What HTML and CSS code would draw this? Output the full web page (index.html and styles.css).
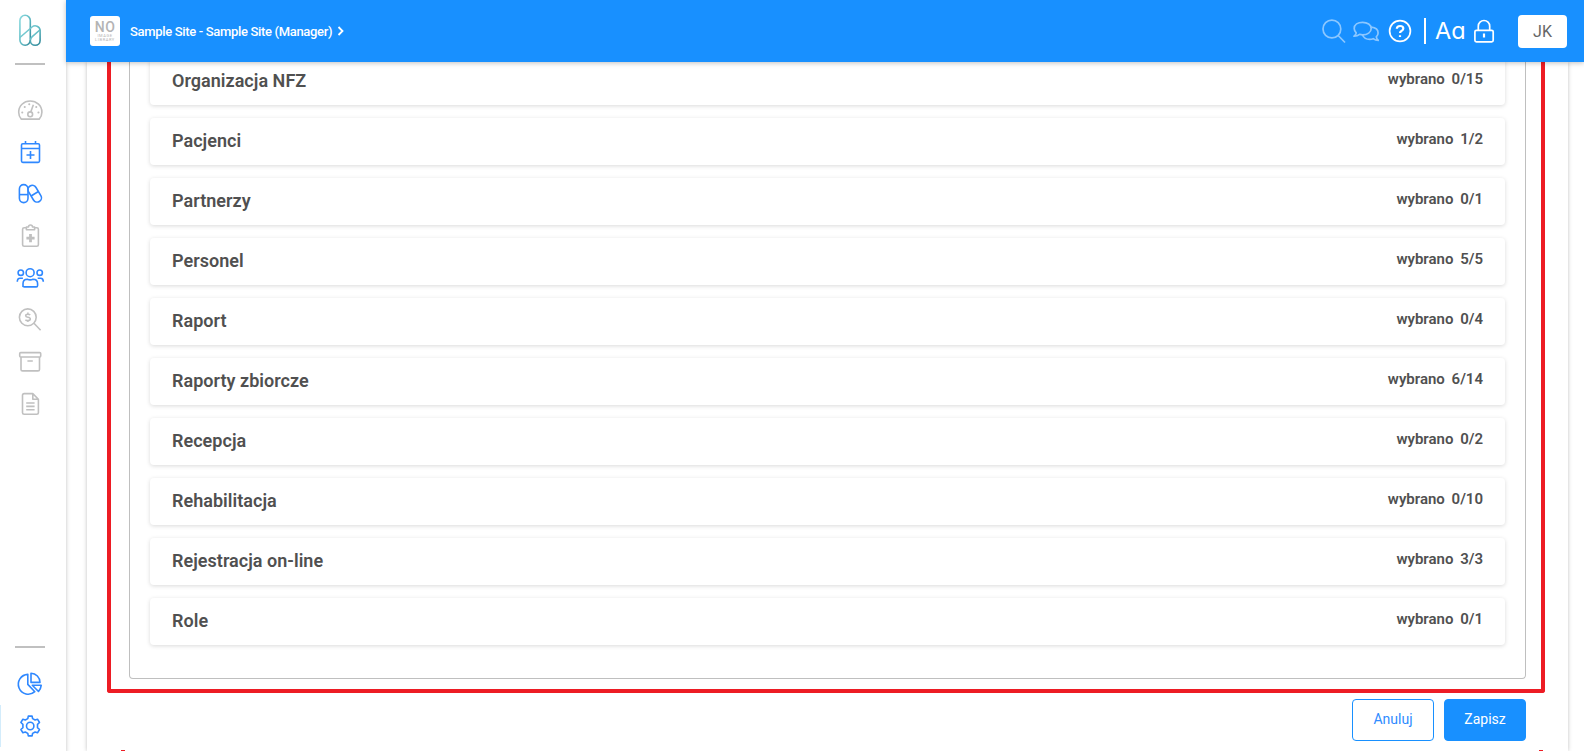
FILE: index.html
```html
<!DOCTYPE html>
<html lang="pl">

<head>
    <meta charset="UTF-8" />
    <title>Uprawnienia</title>
    <meta name="viewport" content="width=device-width, initial-scale=1" />
    <link rel="stylesheet" href="styles.css">
</head>

<body>
    <div class="app">
        <nav class="sidebar">
            <svg class="logo" viewBox="0 0 24 34">
                <defs>
                    <linearGradient id="teal" x1="0" y1="0" x2="1" y2="1">
                        <stop offset="0" stop-color="#8edbe0" />
                        <stop offset="0.5" stop-color="#62bcc5" />
                        <stop offset="1" stop-color="#2f8798" />
                    </linearGradient>
                </defs>
                <g fill="none" stroke="url(#teal)" stroke-width="1.6">
                    <path d="M12.3 25.8V6.5A5.2 5.2 0 0 0 1.9 6.5V26.1A5.2 5.2 0 0 0 12.3 26.1" />
                    <path d="M1.9 23.5L14 13A4.9 4.9 0 0 1 22.1 16.2V26.4A4.9 4.9 0 0 1 12.3 26.4" />
                    <path d="M12.3 26.4Q12.5 24.2 14.2 22.7L21.8 16" />
                </g>
            </svg>
            <span class="line"></span>

            <div class="menu">
                <a class="item">
                    <svg viewBox="0 0 30 30">
                        <path d="M6.3 24.1C4.2 21.9 3.7 19.6 3.7 17.2C3.7 10.8 8.7 6 15.2 6S26.9 10.8 26.9 17.2C26.9 19.6 26.2 21.9 24.2 24.1Z" />
                        <circle cx="15.2" cy="19.3" r="2.4" />
                        <path d="M15.8 16.8L18.4 9.8" />
                        <path class="dots" d="M7.2 17.5h.1M9.7 12h.1M14.2 9.3h.1M21.2 12h.1M23.4 17.5h.1" />
                    </svg>
                </a>
                <a class="item on">
                    <svg viewBox="0 0 30 30">
                        <rect x="6.5" y="6.8" width="18" height="18.6" rx="1.3" />
                        <path d="M6.5 11.5h18M10.5 4v2.8M20.5 4v2.8M15.5 14v8M11.5 18h8" />
                    </svg>
                </a>
                <a class="item on">
                    <svg viewBox="0 0 30 30">
                        <rect x="4.4" y="5.6" width="8.6" height="18" rx="4.3" />
                        <path d="M4.4 15.6h8.6" />
                        <g transform="rotate(-31 19.6 14.7)">
                            <rect x="15.4" y="5.8" width="8.6" height="18" rx="4.3" />
                            <path d="M15.4 14.8h8.6" />
                        </g>
                    </svg>
                </a>
                <a class="item">
                    <svg viewBox="0 0 30 30">
                        <path d="M11 6.7H9.2Q7.6 6.7 7.6 8.3V23.7Q7.6 25.3 9.2 25.3H21.8Q23.4 25.3 23.4 23.7V8.3Q23.4 6.7 21.8 6.7H20" />
                        <path d="M11.4 8.7V6H13.5A2 2 0 0 1 17.5 6H19.6V8.7Z" />
                        <path class="plus" d="M15.5 13v8.2M11.4 17.1h8.2" />
                    </svg>
                </a>
                <a class="item on">
                    <svg viewBox="0 0 30 30">
                        <circle cx="15.1" cy="9.7" r="4" />
                        <circle cx="5.8" cy="9.7" r="2.7" />
                        <circle cx="24.7" cy="9.7" r="2.7" />
                        <path d="M8 23.9V20.7Q8 16.3 12.3 16.3Q15.2 17.5 18 16.3Q22.6 16.3 22.6 20.7V22.5Q22.6 23.9 21.2 23.9H9.4Q8 23.9 8 22.5" />
                        <path d="M2.3 18.8Q2.3 15.2 5 15.2H7.9M28.3 18.8Q28.3 15.2 25.6 15.2H22.7" />
                    </svg>
                </a>
                <a class="item">
                    <svg viewBox="0 0 30 30">
                        <circle cx="12.8" cy="12.3" r="8.4" />
                        <path d="M19 18.2L25.6 25.3" />
                        <path d="M15.2 10.1Q14.5 9.2 12.9 9.2Q10.7 9.2 10.7 10.8Q10.7 12 12.9 12.3Q15.3 12.7 15.3 14Q15.3 15.6 12.9 15.6Q11.2 15.6 10.4 14.7M12.9 7.6V9M12.9 15.6V17" />
                    </svg>
                </a>
                <a class="item">
                    <svg viewBox="0 0 30 30">
                        <rect x="4.7" y="5.6" width="21" height="4.4" rx="1" />
                        <path d="M6 10V22.4Q6 23.9 7.5 23.9H23Q24.5 23.9 24.5 22.4V10M12.4 14H17.8" />
                    </svg>
                </a>
                <a class="item">
                    <svg viewBox="0 0 30 30">
                        <path d="M17.8 4.6H9.2Q7.5 4.6 7.5 6.3V23.7Q7.5 25.3 9.2 25.3H21.7Q23.4 25.3 23.4 23.7V10.2ZM17.8 4.6V10.2H23.4" />
                        <path d="M11.2 14h8.4M11.2 17.4h8.4M11.2 20.7h8.4" />
                    </svg>
                </a>
            </div>

            <div class="menu menu-bottom">
                <span class="line"></span>
                <a class="item on">
                    <svg viewBox="0 0 30 30">
                        <path d="M12.8 5.4V15.4L19.8 22.7A9.9 9.9 0 1 1 12.8 5.4Z" />
                        <path d="M16 4.2A9.2 9.2 0 0 1 25 13.4H16Z" />
                        <path d="M17.3 16.3H26.2Q25.8 20 23.5 22.5Z" />
                    </svg>
                </a>
                <a class="item on active">
                    <svg viewBox="0 0 30 30">
                        <path d="M12.8 7.6L13.3 5.1H17.1L17.6 7.6L20.1 9L22.5 8.2L24.5 11.5L22.5 13.3V16.7L24.5 18.5L22.5 21.8L20.1 21L17.6 22.4L17.1 24.9H13.3L12.8 22.4L10.3 21L7.9 21.8L5.9 18.5L7.9 16.7V13.3L5.9 11.5L7.9 8.2L10.3 9Z" />
                        <circle cx="15.2" cy="15" r="3.7" />
                    </svg>
                </a>
            </div>
        </nav>

        <div class="page">
            <header class="topbar">
                <div class="site-logo">
                    <span class="no">NO</span>
                    <span class="tiny">IMAGE</span>
                    <span class="tiny">LIBRARY</span>
                </div>
                <span class="site-name">Sample Site - Sample Site (Manager)</span>
                <svg class="chevron" viewBox="0 0 8 12"><path d="M1.5 2L5.5 6L1.5 10" /></svg>

                <div class="tools">
                    <svg class="faded" width="24" height="26" viewBox="0 0 24 26">
                        <circle cx="9.9" cy="11" r="8.9" />
                        <path d="M16.2 17.5L23 24.5" />
                    </svg>
                    <svg class="faded" width="26" height="26" viewBox="0 0 26 26">
                        <path d="M1 18.2Q3 16.8 3.2 14.8Q1.2 12.7 1.2 10.5C1.2 6.7 4.8 4.3 9.6 4.3S18.2 6.7 18.2 10.5S14.4 16.8 9.6 16.8Q8 16.8 6.6 16.3Q4.2 18.3 1 18.2Z" />
                        <path d="M18.2 9.2C22.4 9.7 25.1 12 25.1 15Q25.1 17.2 23.3 18.8Q23.6 21 25.4 22.5Q22.4 22.5 20.2 20.7Q18.6 21.4 16.7 21.4Q11.5 21.4 9.5 17" />
                    </svg>
                    <svg class="help" width="24" height="26" viewBox="0 0 24 26">
                        <circle cx="12" cy="13" r="10.4" />
                        <path class="thick" d="M8.8 10.8Q8.9 8 12.1 8Q15.3 8 15.3 10.5Q15.3 11.8 13.7 12.7Q12 13.6 12 15M12 17.2v1.8" />
                    </svg>
                    <span class="divider"></span>
                    <span class="font-size">Aa</span>
                    <svg width="22" height="26" viewBox="0 0 22 26">
                        <rect x="1.9" y="12.3" width="18.3" height="11.5" rx="1.5" />
                        <path d="M5.3 12V8.2A5.7 5.7 0 0 1 16.7 8.2V12" />
                        <path class="thick" d="M11 15.5v4" />
                    </svg>
                </div>
                <div class="user">JK</div>
            </header>

            <main class="panel">
                <div class="frame">
                    <div class="group">
                        <div class="row"><span class="title">Organizacja NFZ</span><span class="count">wybrano <b>0/15</b></span></div>
                        <div class="row"><span class="title">Pacjenci</span><span class="count">wybrano <b>1/2</b></span></div>
                        <div class="row"><span class="title">Partnerzy</span><span class="count">wybrano <b>0/1</b></span></div>
                        <div class="row"><span class="title">Personel</span><span class="count">wybrano <b>5/5</b></span></div>
                        <div class="row"><span class="title">Raport</span><span class="count">wybrano <b>0/4</b></span></div>
                        <div class="row"><span class="title">Raporty zbiorcze</span><span class="count">wybrano <b>6/14</b></span></div>
                        <div class="row"><span class="title">Recepcja</span><span class="count">wybrano <b>0/2</b></span></div>
                        <div class="row"><span class="title">Rehabilitacja</span><span class="count">wybrano <b>0/10</b></span></div>
                        <div class="row"><span class="title">Rejestracja on-line</span><span class="count">wybrano <b>3/3</b></span></div>
                        <div class="row"><span class="title">Role</span><span class="count">wybrano <b>0/1</b></span></div>
                    </div>
                </div>
                <div class="actions">
                    <button class="btn btn-cancel">Anuluj</button>
                    <button class="btn btn-save">Zapisz</button>
                </div>
                <div class="marks"><span></span><span></span></div>
            </main>
        </div>
    </div>
</body>

</html>
```

FILE: styles.css
```css
* {
    box-sizing: border-box;
}

body {
    margin: 0;
    font-family: Roboto, sans-serif;
    color: #505050;
    background-color: #fff;
    overflow: hidden;
}

.app {
    display: flex;
    height: 751px;
}

/* sidebar */
.sidebar {
    width: 66px;
    flex: none;
    display: flex;
    flex-direction: column;
    background: #fff;
    box-shadow: 0 2px 4px rgba(0, 0, 0, 0.25);
}

.logo {
    width: 24px;
    height: 34px;
    margin: 14px 0 15px 18px;
    flex: none;
}

.line {
    display: block;
    width: 30px;
    height: 2px;
    margin-left: 15px;
    flex: none;
    background: #c0c0c0;
}

.menu {
    margin-top: 24px;
}

.menu-bottom {
    margin-top: auto;
    padding-bottom: 4px;
}

.menu-bottom .line {
    margin-bottom: 15px;
}

.item {
    display: flex;
    align-items: center;
    height: 42px;
    padding-left: 15px;
    color: #c0c0c0;
}

.item.on {
    color: #2f88ff;
}

.item.active {
    padding-left: 14px;
    border-left: 1px solid #d3ecfb;
}

.item svg {
    width: 30px;
    height: 30px;
    fill: none;
    stroke: currentColor;
    stroke-width: 1.6;
    stroke-linejoin: round;
    overflow: visible;
}

.item .dots {
    stroke-width: 2;
    stroke-linecap: round;
}

.item .plus {
    stroke-width: 2.8;
}

/* topbar */
.page {
    flex: 1;
    display: flex;
    flex-direction: column;
    min-width: 0;
}

.topbar {
    position: relative;
    z-index: 2;
    display: flex;
    align-items: center;
    height: 62px;
    flex: none;
    padding: 0 17px 0 24px;
    color: #fff;
    background: #1890ff;
    box-shadow: 0 1px 5px rgba(0, 0, 0, 0.25);
}

.site-logo {
    width: 30px;
    height: 30px;
    padding-top: 4px;
    border-radius: 3px;
    background: #fff;
    color: #b4b4b4;
    text-align: center;
}

.site-logo span {
    display: block;
}

.no {
    font: 500 14px/14px Roboto, sans-serif;
    letter-spacing: 0.4px;
}

.tiny {
    font-size: 4px;
    line-height: 4px;
    letter-spacing: 0.6px;
}

.site-name {
    margin-left: 10px;
    font-size: 13px;
    font-weight: 500;
    letter-spacing: -0.33px;
}

.chevron {
    width: 8px;
    height: 12px;
    margin-left: 5px;
    fill: none;
    stroke: #fff;
    stroke-width: 1.8;
}

.tools {
    display: flex;
    align-items: center;
    margin-left: auto;
}

.tools svg {
    fill: none;
    stroke: #fff;
    stroke-width: 1.7;
    stroke-linejoin: round;
}

.tools svg + svg {
    margin-left: 7px;
}

.tools svg + .help {
    margin-left: 9px;
}

.tools .faded {
    opacity: 0.5;
}

.tools .thick {
    stroke-width: 2.2;
}

.divider {
    width: 2px;
    height: 26px;
    margin: 0 9px 0 12px;
    background: #fff;
}

/* cv11 is the single-storey a */
.font-size {
    width: 30px;
    margin-right: 8px;
    font: 23.5px/30px Inter, sans-serif;
    font-feature-settings: "cv11";
}

.user {
    width: 49px;
    height: 33px;
    margin-left: 23px;
    border-radius: 4px;
    background: #fff;
    color: #666;
    font-size: 16px;
    line-height: 33px;
    text-align: center;
}

/* content */
.panel {
    flex: 1;
    display: flex;
    flex-direction: column;
    margin: 0 16px 0 21px;
    padding: 0 23px 0 20px;
    box-shadow: 0 0 4px rgba(0, 0, 0, 0.25);
}

.frame {
    height: 631px;
    padding: 0 15px 10px 18px;
    border: 4px solid #ed1c24;
    border-top: none;
    border-radius: 0 0 3px 3px;
}

.group {
    display: flex;
    flex-direction: column;
    justify-content: flex-end;
    gap: 13px;
    height: 617px;
    padding: 0 20px 33px;
    border: 1px solid #bfbfbf;
    border-top: none;
    border-radius: 0 0 4px 4px;
}

.row {
    display: flex;
    justify-content: space-between;
    flex: none;
    height: 47px;
    padding: 0 22px;
    border-radius: 4px;
    box-shadow: 0 1px 4px rgba(0, 0, 0, 0.15);
}

.title {
    font-size: 18px;
    font-weight: 600;
    line-height: 46px;
    letter-spacing: 0.03px;
}

.count {
    font-size: 15px;
    font-weight: 600;
    line-height: 42px;
}

.count b {
    margin-left: 3px;
    font-weight: 600;
}

.actions {
    display: flex;
    justify-content: flex-end;
    gap: 10px;
    margin-top: 6px;
    padding-right: 19px;
}

.btn {
    width: 82px;
    height: 42px;
    padding: 0 0 2px;
    border: 1px solid #1890ff;
    border-radius: 4px;
    font-family: Roboto, sans-serif;
    font-size: 14px;
}

.btn-cancel {
    background: #fff;
    color: #2f8cff;
}

.btn-save {
    background: #1890ff;
    color: #fff;
}

.marks {
    display: flex;
    justify-content: space-between;
    margin-top: auto;
    padding: 0 2px 0 14px;
}

.marks span {
    width: 4px;
    height: 1px;
    background: #ed1c24;
}
```
